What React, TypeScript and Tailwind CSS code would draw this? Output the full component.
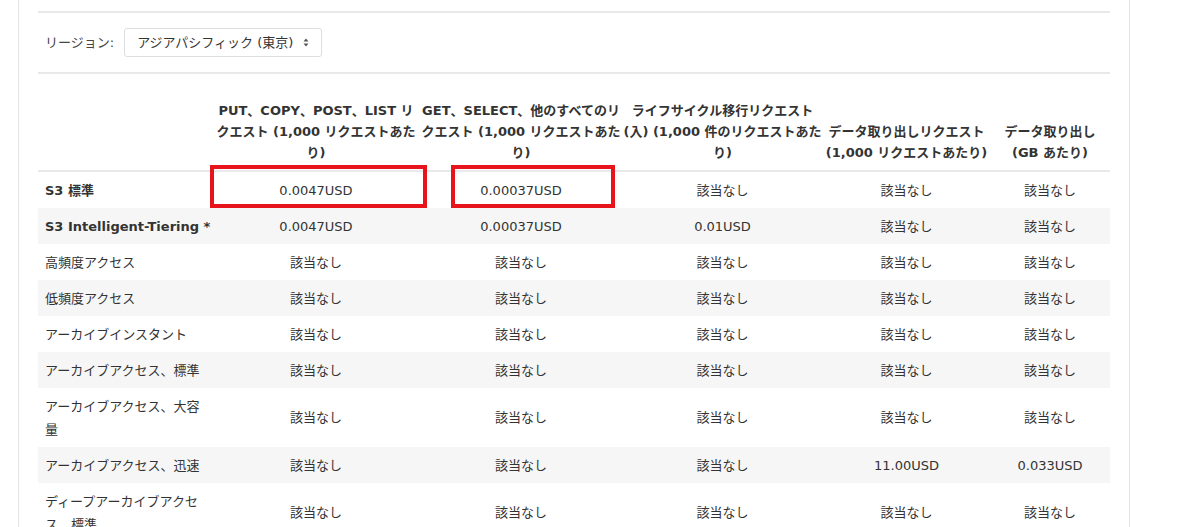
import React from 'react';

type Row = {
  label: React.ReactNode;
  bold?: boolean;
  values: string[];
};

const NA = '該当なし';

const rows: Row[] = [
  { label: 'S3 標準', bold: true, values: ['0.0047USD', '0.00037USD', NA, NA, NA] },
  { label: 'S3 Intelligent-Tiering *', bold: true, values: ['0.0047USD', '0.00037USD', '0.01USD', NA, NA] },
  { label: '高頻度アクセス', values: [NA, NA, NA, NA, NA] },
  { label: '低頻度アクセス', values: [NA, NA, NA, NA, NA] },
  { label: 'アーカイブインスタント', values: [NA, NA, NA, NA, NA] },
  { label: 'アーカイブアクセス、標準', values: [NA, NA, NA, NA, NA] },
  {
    label: (
      <>
        アーカイブアクセス、大容
        <br />量
      </>
    ),
    values: [NA, NA, NA, NA, NA],
  },
  { label: 'アーカイブアクセス、迅速', values: [NA, NA, NA, '11.00USD', '0.033USD'] },
  {
    label: (
      <>
        ディープアーカイブアクセ
        <br />ス、標準
      </>
    ),
    values: [NA, NA, NA, NA, NA],
  },
];

const headers: string[][] = [
  ['PUT、COPY、POST、LIST リ', 'クエスト (1,000 リクエストあた', 'り)'],
  ['GET、SELECT、他のすべてのリ', 'クエスト (1,000 リクエストあた', 'り)'],
  ['ライフサイクル移行リクエスト', '(入) (1,000 件のリクエストあた', 'り)'],
  ['', 'データ取り出しリクエスト', '(1,000 リクエストあたり)'],
  ['', 'データ取り出し', '(GB あたり)'],
];

const SortArrows = () => (
  <svg width="6" height="9" viewBox="0 0 6 9" className="ml-[10px]">
    <path d="M3 0.5 L5.5 3.5 L0.5 3.5 Z" fill="#555" />
    <path d="M3 8.5 L5.5 5.5 L0.5 5.5 Z" fill="#555" />
  </svg>
);

export default function App() {
  return (
    <div
      className="relative h-[527px] w-[1200px] overflow-hidden bg-white text-[13px] text-[#333]"
      style={{ fontFamily: '"DejaVu Sans", "Noto Sans CJK JP", sans-serif' }}
    >
      <div className="ml-[18px] h-full w-[1112px] border-x border-[#e3e6e6] px-[19px] pt-[11px]">
        <div className="flex items-center border-t-2 border-[#e8eaea] py-[15px]">
          <span className="ml-[7px] mr-[10px] text-[#444]">リージョン:</span>
          <div className="flex h-[29px] w-[198px] items-center rounded-[3px] border border-[#dcdfe0] pl-[12px]">
            <span className="whitespace-nowrap">アジアパシフィック (東京)</span>
            <SortArrows />
          </div>
        </div>

        <table className="w-[1072px] table-fixed border-collapse border-t-2 border-[#e8eaea]">
          <colgroup>
            <col className="w-[174px]" />
            <col className="w-[208px]" />
            <col className="w-[202px]" />
            <col className="w-[201px]" />
            <col className="w-[167px]" />
            <col className="w-[120px]" />
          </colgroup>
          <thead>
            <tr className="border-b-2 border-[#e8eaea]">
              <th className="h-[96px]" />
              {headers.map((lines, i) => (
                <th
                  key={i}
                  className="px-0 pt-[26px] pb-[7px] align-top text-center font-bold leading-[21px] whitespace-nowrap"
                >
                  {lines.map((l, j) => (
                    <div key={j} className="h-[21px]">
                      {l}
                    </div>
                  ))}
                </th>
              ))}
            </tr>
          </thead>
          <tbody>
            {rows.map((r, i) => (
              <tr key={i} className={i % 2 === 1 ? 'bg-[#f6f6f6]' : ''}>
                <td
                  className={`py-[6.5px] pl-[7px] pr-0 align-middle leading-[23px] ${
                    r.bold ? 'font-bold' : ''
                  }`}
                >
                  {r.label}
                </td>
                {r.values.map((v, j) => (
                  <td key={j} className="py-[6.5px] text-center align-middle leading-[23px]">
                    {v}
                  </td>
                ))}
              </tr>
            ))}
          </tbody>
        </table>
      </div>

      <div className="absolute left-[210px] top-[165px] h-[43px] w-[217px] border-4 border-[#e8141c]" />
      <div className="absolute left-[451px] top-[165px] h-[43px] w-[164px] border-4 border-[#e8141c]" />
    </div>
  );
}
